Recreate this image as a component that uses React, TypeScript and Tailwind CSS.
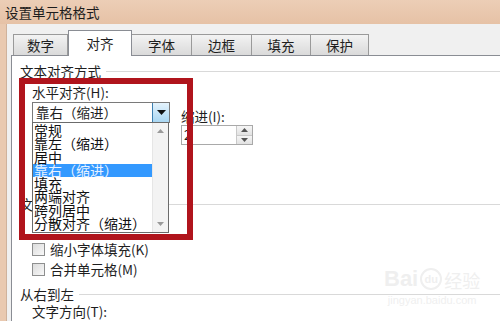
import React from 'react';

const tabs = [
  { label: '数字', w: 'w-[55px]' },
  { label: '对齐', w: 'w-[64px]', active: true },
  { label: '字体', w: 'w-[60px]' },
  { label: '边框', w: 'w-[60px]' },
  { label: '填充', w: 'w-[59px]' },
  { label: '保护', w: 'w-[58px]' },
];

const options = ['常规', '靠左（缩进）', '居中', '靠右（缩进）', '填充', '两端对齐', '跨列居中', '分散对齐（缩进）'];

function Heading({ text }: { text: string }) {
  return (
    <div className="flex items-center h-[15px] pl-[8px]">
      <span className="text-[13.5px] leading-[15px] text-[#1e1e1e] whitespace-nowrap">{text}</span>
      <div className="flex-1 h-px bg-[#d9d9d9] ml-[5px]" />
    </div>
  );
}

function Checkbox({ label }: { label: string }) {
  return (
    <div className="flex items-center h-[14px] pl-[20px]">
      <div className="w-[13px] h-[13px] border border-[#8e8f8f] bg-gradient-to-br from-[#dcdcdc] to-[#f8f8f8]" />
      <span className="ml-[5px] text-[13.5px] leading-[14px] text-[#1e1e1e] whitespace-nowrap">{label}</span>
    </div>
  );
}

export default function App() {
  return (
    <div className="relative w-[500px] h-[321px] overflow-hidden bg-[#e9c7ad] font-['Noto_Sans_CJK_SC','Noto_Sans',sans-serif]">
      {/* title bar */}
      <div className="h-[24px] pl-[5px] pt-[3px] text-[13.5px] leading-[18px] text-[#1c1c1c] bg-gradient-to-b from-[#ecceb6] to-[#e6c2a6]">
        设置单元格格式
      </div>

      <div className="flex h-[297px]">
        <div className="w-[7px] bg-[#e9c9b0] border-r border-[#cfb29c]" />
        <div className="flex-1 bg-[#f0f0f0] pt-[10px] pl-[4px] flex flex-col">
          {/* tabs */}
          <div className="flex items-end h-[21px] ml-[2px]">
            {tabs.map((t) =>
              t.active ? (
                <div
                  key={t.label}
                  className={`${t.w} h-[26px] -mb-px relative z-10 bg-white border border-b-0 border-[#8a8d94] flex items-center justify-center text-[13.5px] text-[#1e1e1e]`}
                >
                  {t.label}
                </div>
              ) : (
                <div
                  key={t.label}
                  className={`${t.w} h-[21px] bg-gradient-to-b from-[#f3f3f3] to-[#dadada] border border-b-0 border-l-0 first:border-l border-[#9a9a9a] flex items-center justify-center text-[13.5px] text-[#1e1e1e]`}
                >
                  {t.label}
                </div>
              )
            )}
          </div>

          {/* panel */}
          <div className="flex-1 bg-white border-t border-l border-[#8a8d94] pt-[8px]">
            <Heading text="文本对齐方式" />

            <div className="flex pl-[20px] mt-[6px]">
              <div className="w-[138px]">
                <div className="h-[15px] text-[13.5px] leading-[15px] text-[#1e1e1e] whitespace-nowrap">水平对齐(H):</div>
                <div className="mt-[2px] h-[21px] border border-[#7a7a7a] bg-white flex items-center">
                  <span className="flex-1 pl-[3px] text-[13.5px] leading-[15px] text-[#1e1e1e] whitespace-nowrap">靠右（缩进）</span>
                  <div className="w-[17px] h-[19px] bg-gradient-to-b from-[#e4f3fc] to-[#a9d6f2] border-l border-[#3c7fb1] flex items-center justify-center">
                    <svg width="9" height="5" viewBox="0 0 9 5">
                      <path d="M0 0h9L4.5 5z" fill="#111" />
                    </svg>
                  </div>
                </div>
              </div>
              <div className="ml-[11px] pt-[24px]">
                <div className="h-[15px] text-[13.5px] leading-[15px] text-[#1e1e1e] whitespace-nowrap">缩进(I):</div>
                <div className="mt-[1px] w-[72px] h-[20px] border border-[#a9a9a9] flex items-stretch">
                  <span className="flex-1 pl-[2px] text-[13px] leading-[18px] text-[#1e1e1e]">2</span>
                  <div className="w-[16px] flex flex-col border-l border-[#c9c9c9]">
                    <div className="flex-1 flex items-center justify-center bg-gradient-to-b from-[#f6f6f6] to-[#e2e2e2] border-b border-[#c9c9c9]">
                      <svg width="7" height="4" viewBox="0 0 7 4">
                        <path d="M0 4h7L3.5 0z" fill="#555" />
                      </svg>
                    </div>
                    <div className="flex-1 flex items-center justify-center bg-gradient-to-b from-[#f6f6f6] to-[#e2e2e2]">
                      <svg width="7" height="4" viewBox="0 0 7 4">
                        <path d="M0 0h7L3.5 4z" fill="#555" />
                      </svg>
                    </div>
                  </div>
                </div>
              </div>
            </div>

            <div className="mt-[52px]">
              <Heading text="文本控制" />
            </div>
            <div className="mt-[30px]">
              <Checkbox label="缩小字体填充(K)" />
            </div>
            <div className="mt-[6px]">
              <Checkbox label="合并单元格(M)" />
            </div>
            <div className="mt-[11px]">
              <Heading text="从右到左" />
            </div>
            <div className="mt-[2px] pl-[20px] h-[15px] text-[13.5px] leading-[15px] text-[#1e1e1e] whitespace-nowrap">文字方向(T):</div>
            <div className="mt-[4px] ml-[20px] w-[116px] h-[20px] border border-[#a0a0a0]" />
          </div>
        </div>
      </div>

      {/* open dropdown list */}
      <div className="absolute left-[32px] top-[122px] w-[137px] h-[111px] bg-white border border-[#6b6b6b] flex">
        <div className="flex-1 pt-[1px]">
          {options.map((o) => (
            <div
              key={o}
              className={`h-[13.3px] pl-[1px] text-[14px] leading-[13px] whitespace-nowrap ${
                o === '靠右（缩进）' ? 'bg-[#3399ff] text-[#e8f2ff]' : 'text-[#111]'
              }`}
            >
              {o}
            </div>
          ))}
        </div>
        <div className="w-[16px] bg-[#f3f3f3] border-l border-[#e6e6e6] flex flex-col justify-between items-center py-[6px]">
          <svg width="7" height="4" viewBox="0 0 7 4">
            <path d="M0 4h7L3.5 0z" fill="#9a9a9a" />
          </svg>
          <svg width="7" height="4" viewBox="0 0 7 4">
            <path d="M0 0h7L3.5 4z" fill="#9a9a9a" />
          </svg>
        </div>
      </div>

      {/* red annotation box */}
      <div className="absolute left-[19px] top-[78px] w-[174px] h-[162px] border-[6px] border-[#b0141c]" />

      {/* watermark */}
      <div className="absolute left-[384px] top-[268px] flex flex-col items-center text-[#efefef] pointer-events-none">
        <div className="flex items-end font-['Liberation_Sans',sans-serif]">
          <span className="text-[22px] leading-[22px] font-bold">Bai</span>
          <span className="mx-[2px] w-[22px] h-[22px] rounded-full border-2 border-[#efefef] text-[11px] leading-[18px] text-center font-bold">du</span>
          <span className="text-[18px] leading-[20px] font-['Noto_Sans_CJK_SC',sans-serif]">经验</span>
        </div>
        <span className="mt-[4px] text-[11px] leading-[12px] font-['Liberation_Sans',sans-serif]">jingyan.baidu.com</span>
      </div>
    </div>
  );
}
